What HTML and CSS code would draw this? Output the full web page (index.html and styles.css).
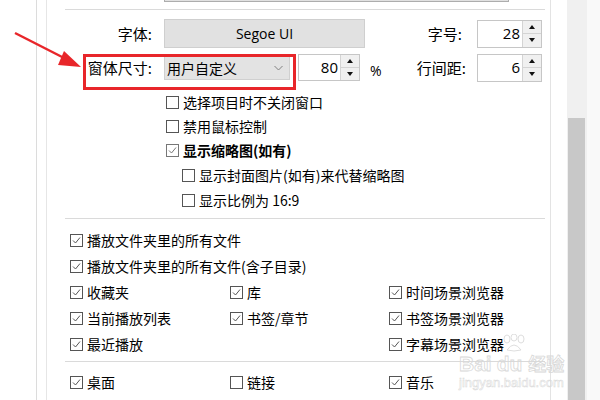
FILE: index.html
```html
<!DOCTYPE html>
<html lang="zh">
<head>
<meta charset="utf-8">
<link rel="stylesheet" href="styles.css">
</head>
<body>
<div class="page">
  <div class="gutter"></div>
  <div class="gap"></div>
  <div class="panel">
    <div class="topbox"></div>
    <div class="sep first"></div>

    <div class="row row1">
      <div class="lbl">字体:</div>
      <div class="fontbtn">Segoe UI</div>
      <div class="lbl lbl2">字号:</div>
      <div class="spin spin-w">
        <div class="val">28</div>
        <div class="btns"><div class="up"></div><div class="dn"></div></div>
      </div>
    </div>

    <div class="row row2">
      <div class="lbl">窗体尺寸:</div>
      <div class="combo"><span>用户自定义</span>
        <svg class="chev" width="9" height="6" viewBox="0 0 9 6"><path d="M0.5 1 L4.5 5 L8.5 1" fill="none" stroke="#808080" stroke-width="1"/></svg>
      </div>
      <div class="spin spin-s">
        <div class="val">80</div>
        <div class="btns"><div class="up"></div><div class="dn"></div></div>
      </div>
      <div class="pctwrap"><span class="pct">%</span><span class="lbl3">行间距:</span></div>
      <div class="spin spin-w spin-lh">
        <div class="val">6</div>
        <div class="btns"><div class="up"></div><div class="dn"></div></div>
      </div>
    </div>

    <div class="opts">
      <div class="cb"><svg class="box" viewBox="0 0 13 13"><rect x="0.5" y="0.5" width="12" height="12" fill="#fff" stroke="#555"/></svg>选择项目时不关闭窗口</div>
      <div class="cb"><svg class="box" viewBox="0 0 13 13"><rect x="0.5" y="0.5" width="12" height="12" fill="#fff" stroke="#555"/></svg>禁用鼠标控制</div>
      <div class="cb bold"><svg class="box" viewBox="0 0 13 13"><rect x="0.5" y="0.5" width="12" height="12" fill="#fff" stroke="#777"/><path d="M3 6.5 L5.5 9 L10 3.5" fill="none" stroke="#777"/></svg>显示缩略图(如有)</div>
      <div class="cb sub"><svg class="box" viewBox="0 0 13 13"><rect x="0.5" y="0.5" width="12" height="12" fill="#fff" stroke="#555"/></svg>显示封面图片(如有)来代替缩略图</div>
      <div class="cb sub"><svg class="box" viewBox="0 0 13 13"><rect x="0.5" y="0.5" width="12" height="12" fill="#fff" stroke="#555"/></svg>显示比例为 16:9</div>
    </div>

    <div class="sep sep2"></div>

    <div class="grid">
      <div class="cb span3"><svg class="box" viewBox="0 0 13 13"><rect x="0.5" y="0.5" width="12" height="12" fill="#fff" stroke="#555"/><path d="M3 6.5 L5.5 9 L10 3.5" fill="none" stroke="#555"/></svg>播放文件夹里的所有文件</div>
      <div class="cb span3"><svg class="box" viewBox="0 0 13 13"><rect x="0.5" y="0.5" width="12" height="12" fill="#fff" stroke="#555"/><path d="M3 6.5 L5.5 9 L10 3.5" fill="none" stroke="#555"/></svg>播放文件夹里的所有文件(含子目录)</div>
      <div class="cb"><svg class="box" viewBox="0 0 13 13"><rect x="0.5" y="0.5" width="12" height="12" fill="#fff" stroke="#555"/><path d="M3 6.5 L5.5 9 L10 3.5" fill="none" stroke="#555"/></svg>收藏夹</div>
      <div class="cb"><svg class="box" viewBox="0 0 13 13"><rect x="0.5" y="0.5" width="12" height="12" fill="#fff" stroke="#555"/><path d="M3 6.5 L5.5 9 L10 3.5" fill="none" stroke="#555"/></svg>库</div>
      <div class="cb"><svg class="box" viewBox="0 0 13 13"><rect x="0.5" y="0.5" width="12" height="12" fill="#fff" stroke="#555"/><path d="M3 6.5 L5.5 9 L10 3.5" fill="none" stroke="#555"/></svg>时间场景浏览器</div>
      <div class="cb"><svg class="box" viewBox="0 0 13 13"><rect x="0.5" y="0.5" width="12" height="12" fill="#fff" stroke="#555"/><path d="M3 6.5 L5.5 9 L10 3.5" fill="none" stroke="#555"/></svg>当前播放列表</div>
      <div class="cb"><svg class="box" viewBox="0 0 13 13"><rect x="0.5" y="0.5" width="12" height="12" fill="#fff" stroke="#555"/><path d="M3 6.5 L5.5 9 L10 3.5" fill="none" stroke="#555"/></svg>书签/章节</div>
      <div class="cb"><svg class="box" viewBox="0 0 13 13"><rect x="0.5" y="0.5" width="12" height="12" fill="#fff" stroke="#555"/><path d="M3 6.5 L5.5 9 L10 3.5" fill="none" stroke="#555"/></svg>书签场景浏览器</div>
      <div class="cb"><svg class="box" viewBox="0 0 13 13"><rect x="0.5" y="0.5" width="12" height="12" fill="#fff" stroke="#555"/><path d="M3 6.5 L5.5 9 L10 3.5" fill="none" stroke="#555"/></svg>最近播放</div>
      <div class="cb empty"></div>
      <div class="cb"><svg class="box" viewBox="0 0 13 13"><rect x="0.5" y="0.5" width="12" height="12" fill="#fff" stroke="#555"/><path d="M3 6.5 L5.5 9 L10 3.5" fill="none" stroke="#555"/></svg>字幕场景浏览器</div>
    </div>

    <div class="sep sep3"></div>

    <div class="grid grid2">
      <div class="cb"><svg class="box" viewBox="0 0 13 13"><rect x="0.5" y="0.5" width="12" height="12" fill="#fff" stroke="#555"/><path d="M3 6.5 L5.5 9 L10 3.5" fill="none" stroke="#555"/></svg>桌面</div>
      <div class="cb"><svg class="box" viewBox="0 0 13 13"><rect x="0.5" y="0.5" width="12" height="12" fill="#fff" stroke="#555"/></svg>链接</div>
      <div class="cb"><svg class="box" viewBox="0 0 13 13"><rect x="0.5" y="0.5" width="12" height="12" fill="#fff" stroke="#555"/><path d="M3 6.5 L5.5 9 L10 3.5" fill="none" stroke="#555"/></svg>音乐</div>
    </div>
  </div>
  <div class="spacer"></div>
  <div class="scroll"><div class="thumb"></div></div>
  <div class="edge"></div>

  <div class="highlight"></div>
  <svg class="arrow" width="90" height="80" viewBox="0 0 90 80">
    <line x1="15" y1="33" x2="68" y2="60" stroke="#e8262a" stroke-width="2.5"/>
    <polygon points="81,67 64,51 58,65" fill="#e8262a"/>
  </svg>
  <div class="watermark">
    <svg class="paw" width="26" height="18" viewBox="0 0 26 18">
      <g fill="none" stroke="#dedede" stroke-width="1">
        <ellipse cx="6" cy="5" rx="3" ry="4"/>
        <ellipse cx="13" cy="3.5" rx="3" ry="3.5"/>
        <ellipse cx="20" cy="5" rx="3" ry="4"/>
        <path d="M6 16 Q13 6 20 16 Q13 18 6 16 Z"/>
      </g>
    </svg>
    <div class="wm1">Bai<span class="du">du</span><span class="jy">经验</span></div>
    <div class="wm2">jingyan.baidu.com</div>
  </div>
</div>
</body>
</html>
```

FILE: styles.css
```css
html, body {
  margin: 0;
  padding: 0;
  background: #fff;
}
body {
  font-family: "Noto Sans CJK SC", "Noto Sans", sans-serif;
  font-size: 14px;
  color: #000;
}
.page {
  position: relative;
  width: 600px;
  height: 400px;
  overflow: hidden;
  display: flex;
}
.gutter {
  width: 36px;
  border-right: 1px solid #dcdcdc;
}
.gap {
  width: 9px;
  border-right: 1px solid #e6e6e6;
}
.panel {
  width: 503px;
  border-right: 1px solid #e3e3e3;
  display: flex;
  flex-direction: column;
}
.spacer { width: 16px; }
.scroll {
  width: 20px;
  background: #f0f0f0;
  position: relative;
}
.thumb {
  margin-top: 118px;
  margin-left: 1px;
  width: 17px;
  height: 282px;
  background: #c8c8c8;
}
.edge {
  flex: 1;
  background: #f9f9f9;
}
.topbox {
  margin-left: 117px;
  width: 343px;
  height: 1px;
  background: #e1e1e1;
  border: 1px solid #adadad;
  border-top: none;
}
.sep {
  margin-left: 18px;
  width: 480px;
  height: 1px;
  flex: none;
  background: #dadada;
}
.sep.first { margin-top: 7px; }
.sep2 { margin-top: 6px; }

.row {
  display: flex;
  align-items: center;
}
.row1 { margin-top: 9px; height: 29px; }
.row2 { margin-top: 5px; height: 29px; }
.lbl {
  width: 105px;
  text-align: right;
  font-size: 15px;
  margin-right: 12px;
}
.fontbtn {
  box-sizing: border-box;
  width: 201px;
  height: 29px;
  background: #e1e1e1;
  border: 1px solid #cfcfcf;
  font-family: "Open Sans", "Noto Sans", sans-serif;
  font-size: 14px;
  text-align: center;
  line-height: 27px;
}
.lbl2 {
  width: 97px;
  margin-right: 15px;
}
.spin {
  box-sizing: border-box;
  display: flex;
  height: 28px;
  background: #fff;
  border: 1px solid #c6c6c6;
}
.spin-w { width: 65px; }
.spin-s { width: 62px; margin-left: 8px; height: 27px; }
.spin-lh { margin-left: 11px; }
.val {
  flex: 1;
  text-align: right;
  padding-right: 2px;
  font-family: "Open Sans", "Noto Sans", sans-serif;
  font-size: 15px;
  line-height: 24px;
}
.btns {
  width: 18px;
  display: flex;
  flex-direction: column;
  border-left: 1px solid #d4d4d4;
}
.up, .dn {
  flex: 1;
  background: #f0f0f0;
  position: relative;
}
.up { border-bottom: 1px solid #d4d4d4; }
.up::after, .dn::after {
  content: "";
  position: absolute;
  left: 6px;
  top: 50%;
  margin-top: -2px;
  border-left: 3px solid transparent;
  border-right: 3px solid transparent;
}
.up::after { border-bottom: 4px solid #111; }
.dn::after { border-top: 4px solid #111; }

.combo {
  box-sizing: border-box;
  width: 126px;
  height: 24px;
  background: #e3e3e3;
  border: 1px solid #d0d0d0;
  display: flex;
  align-items: center;
  justify-content: space-between;
  padding: 0 6px 0 2px;
  font-size: 14px;
}
.chev { display: block; }
.pctwrap {
  width: 106px;
  display: flex;
  justify-content: space-between;
  align-items: center;
  font-size: 15px;
}
.pct {
  margin-left: 10px;
  margin-top: 6px;
  font-family: "Open Sans", "Noto Sans", sans-serif;
  font-size: 14px;
}

.opts {
  margin-top: 8px;
  margin-left: 119px;
  display: flex;
  flex-direction: column;
}
.cb {
  display: flex;
  align-items: center;
  height: 24px;
  white-space: nowrap;
}
.box {
  width: 13px;
  height: 13px;
  margin-right: 4px;
  flex: none;
}
.bold { font-weight: bold; }
.sub { margin-left: 16px; }
.opts .cb:nth-child(4) { height: 26px; }

.grid {
  margin-top: 8px;
  margin-left: 23px;
  display: grid;
  grid-template-columns: 160px 159px 160px;
  grid-auto-rows: 26px;
  align-items: center;
}
.grid .cb { height: 26px; }
.span3 { grid-column: 1 / 4; }
.sep3 { margin-top: 4px; }
.grid2 { margin-top: 7px; }

.highlight {
  position: absolute;
  left: 83px;
  top: 54px;
  width: 207px;
  height: 30px;
  border: 3px solid #e8262a;
}
.arrow {
  position: absolute;
  left: 0;
  top: 0;
}
.watermark {
  position: absolute;
  left: 459px;
  top: 338px;
  width: 110px;
  white-space: nowrap;
  color: rgba(255,255,255,0);
  -webkit-text-stroke: 0.8px #d8d8d8;
  font-family: "Liberation Sans", sans-serif;
}
.paw {
  position: absolute;
  left: 42px;
  top: -4px;
}
.wm1 {
  margin-top: 14px;
  font-size: 21px;
  font-weight: bold;
  line-height: 22px;
}
.du { margin-left: 5px; }
.jy {
  margin-left: 6px;
  font-family: "Noto Sans CJK SC", sans-serif;
  font-size: 18px;
}
.wm2 {
  font-size: 13px;
  line-height: 16px;
  -webkit-text-stroke: 0.5px #d8d8d8;
}
```
